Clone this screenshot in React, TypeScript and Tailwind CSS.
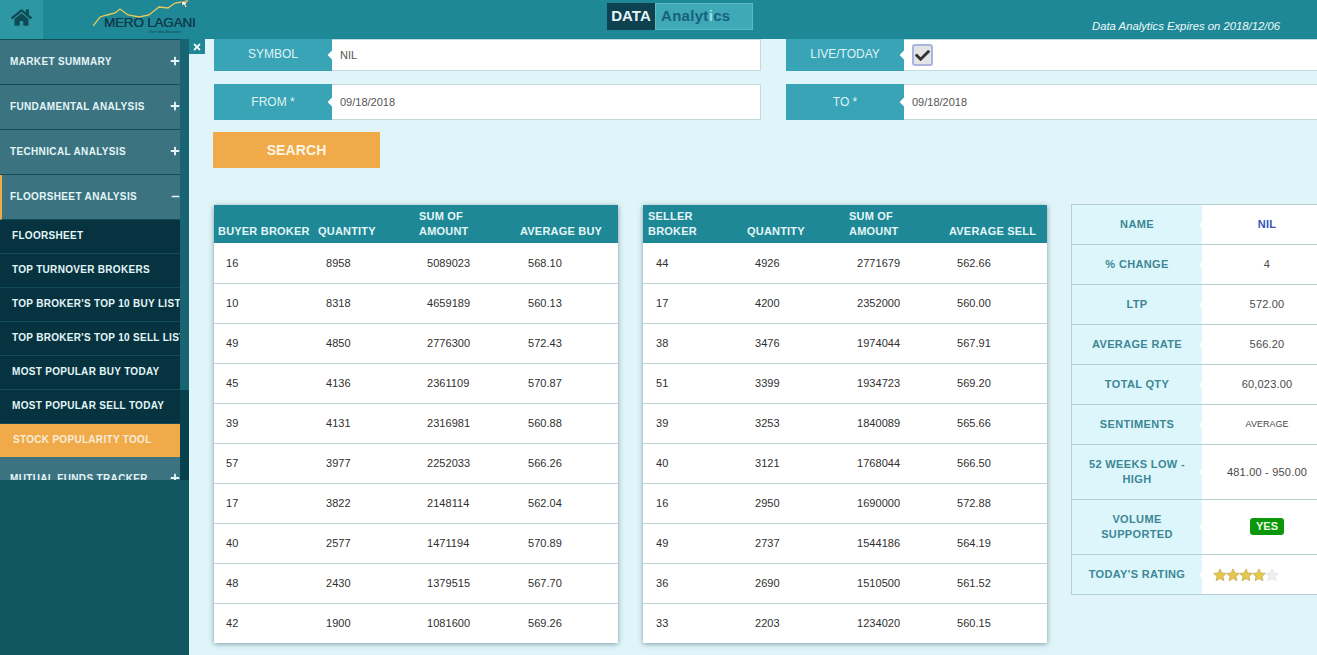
import { FaHome, FaCheck, FaTimes, FaPlus, FaMinus } from "react-icons/fa";

const font = { fontFamily: '"Liberation Sans", Arial, sans-serif' };

const menuTop = ["MARKET SUMMARY", "FUNDAMENTAL ANALYSIS", "TECHNICAL ANALYSIS"];
const subMenu = [
  "FLOORSHEET",
  "TOP TURNOVER BROKERS",
  "TOP BROKER'S TOP 10 BUY LIST",
  "TOP BROKER'S TOP 10 SELL LIST",
  "MOST POPULAR BUY TODAY",
  "MOST POPULAR SELL TODAY",
];

const buyRows = [
  ["16", "8958", "5089023", "568.10"],
  ["10", "8318", "4659189", "560.13"],
  ["49", "4850", "2776300", "572.43"],
  ["45", "4136", "2361109", "570.87"],
  ["39", "4131", "2316981", "560.88"],
  ["57", "3977", "2252033", "566.26"],
  ["17", "3822", "2148114", "562.04"],
  ["40", "2577", "1471194", "570.89"],
  ["48", "2430", "1379515", "567.70"],
  ["42", "1900", "1081600", "569.26"],
];
const sellRows = [
  ["44", "4926", "2771679", "562.66"],
  ["17", "4200", "2352000", "560.00"],
  ["38", "3476", "1974044", "567.91"],
  ["51", "3399", "1934723", "569.20"],
  ["39", "3253", "1840089", "565.66"],
  ["40", "3121", "1768044", "566.50"],
  ["16", "2950", "1690000", "572.88"],
  ["49", "2737", "1544186", "564.19"],
  ["36", "2690", "1510500", "561.52"],
  ["33", "2203", "1234020", "560.15"],
];

function MenuItem({ label, open, active }: { label: string; open?: boolean; active?: boolean }) {
  return (
    <div
      className={`flex h-[45px] shrink-0 items-center justify-between border-b border-[#0f4f5c] bg-[#3b7380] pb-0.5 text-[10px] font-bold tracking-[0.35px] text-[#e4f6f8] ${
        active ? "border-l-2 border-l-[#f0aa4a] pl-2" : "pl-2.5"
      }`}
    >
      <span>{label}</span>
      {open ? <FaMinus className="text-[9px]" /> : <FaPlus className="text-[10px]" />}
    </div>
  );
}

function FormField({ label, value, check, tight }: { label: string; value?: string; check?: boolean; tight?: boolean }) {
  return (
    <div className="flex h-full pl-px">
      <div className={`flex w-[118px] items-center justify-center bg-[#39a4b5] text-[12px] text-[#dff3f6] ${tight ? "pb-0.5" : ""}`}>{label}</div>
      <div className="relative flex flex-1 items-center border border-l-0 border-[#c2dbdc] bg-white pl-2 text-[11px] text-[#555]">
        <span className="absolute -left-[3px] top-1/2 h-[7px] w-[7px] -translate-y-1/2 rotate-45 bg-white" />
        {check ? (
          <span className="flex h-[22px] w-[21px] items-center justify-center rounded-[3px] border-2 border-[#a9b5dc] bg-[#e4e4e4] text-[15px] text-[#333]">
            <FaCheck />
          </span>
        ) : (
          value
        )}
      </div>
    </div>
  );
}

function DataTable({ head, rows, cols, thPad, tdPad }: { head: string[]; rows: string[][]; cols: string[]; thPad: string; tdPad: string }) {
  return (
    <table className="w-[404px] table-fixed border-collapse bg-white shadow-[0_1px_5px_rgba(40,80,90,0.55)]">
      <colgroup>
        {cols.map((c, i) => (
          <col key={i} className={c} />
        ))}
      </colgroup>
      <thead>
        <tr className="h-[38px] bg-[#1e8896] text-[11px] font-bold leading-[15px] tracking-[0.2px] text-[#e4f6f8]">
          {head.map((h, i) => (
            <th key={h} className={`pb-1 pr-0 text-left align-bottom font-bold ${thPad}`}>
              {i === 2 ? <span className="block w-[50px]">{h}</span> : h}
            </th>
          ))}
        </tr>
      </thead>
      <tbody>
        {rows.map((r) => (
          <tr key={r[2]} className="h-10 border-b border-[#bfd3d6] text-[11px] tracking-[0.05px] text-[#2f2f2f] last:border-b-0">
            {r.map((c) => (
              <td key={c} className={tdPad}>
                {c}
              </td>
            ))}
          </tr>
        ))}
      </tbody>
    </table>
  );
}

function Star({ fill }: { fill: string }) {
  return (
    <svg width="14" height="14" viewBox="0 0 24 24" className="-mr-px">
      <path
        d="M12 1.500l3.200 7 7.600.8-5.700 5.100 1.600 7.500L12 18l-6.700 3.900 1.600-7.500L1.200 9.300l7.600-.8z"
        fill={fill}
        stroke={fill === "#e6c84e" ? "#b59a35" : "#dddddd"}
        strokeWidth="1"
      />
    </svg>
  );
}

function InfoRow({ label, h, children }: { label: React.ReactNode; h: string; children: React.ReactNode }) {
  return (
    <div className={`flex ${h} border-b border-[#b5d0d3] last:border-b-0`}>
      <div className="flex w-[130px] items-center justify-center bg-[#dcf6fc] px-2 text-center text-[11px] font-bold leading-[15px] tracking-[0.35px] text-[#3d8794]">
        {label}
      </div>
      <div className="relative flex flex-1 items-center justify-center bg-white text-[11px] tracking-[0.2px] text-[#4a4a4a]">
        <span className="absolute -left-[2px] top-1/2 h-[5px] w-[5px] -translate-y-1/2 rotate-45 bg-white" />
        {children}
      </div>
    </div>
  );
}

export default function App() {
  return (
    <div className="flex h-[655px] w-[1317px] flex-col overflow-hidden bg-[#e0f5f9]" style={font}>
      <header className="flex h-[39px] shrink-0 items-center bg-[#1e8896]">
        <div className="flex h-full w-[43px] items-center justify-center bg-[#2e97a4] pb-1 text-[21px] text-[#0f4a55]">
          <FaHome />
        </div>
        <div className="relative ml-[50px] h-full w-[104px]">
          <svg width="104" height="26" viewBox="0 0 104 26" className="absolute left-0 top-0">
            <polyline
              points="0,26 7,17 14,15 22,13 27,9 35,15 46,17 56,15 66,7 75,8 82,3 95,1"
              fill="none"
              stroke="#e8c95a"
              strokeWidth="1.3"
            />
            <path d="M89 1l6 2-2.500 1 1.500 3-1.500.6-1.500-3-2 1.500z" fill="#ffffff" stroke="#333" strokeWidth="0.4" />
          </svg>
          <span className="absolute left-[11px] top-[18px] whitespace-nowrap text-[13.5px] leading-[10px] tracking-[-0.2px] text-[#0e3a4b] [text-shadow:0_0_0.5px_#0e3a4b]">
            MERO LAGANI
          </span>
          <span className="absolute left-[56px] top-[29px] whitespace-nowrap font-['Liberation_Serif'] text-[5px] italic leading-[6px] text-[#0e3a4b]">
            For the Investor
          </span>
        </div>
        <div className="ml-[410px] mt-[3px] flex h-[27px] w-[146px] self-start">
          <div className="flex w-[48px] items-center justify-center bg-[#0f4250] text-[15px] font-bold text-[#e8f6f8]">DATA</div>
          <div className="flex flex-1 items-center border border-[#5fb8c6] bg-[#40a9b8] pl-[5px] text-[15px] font-bold tracking-[0.3px] text-[#15617a]">
            Analyt<span className="text-[#9fe0e8]">i</span>cs
          </div>
        </div>
        <div className="ml-auto mr-[37px] mt-[14px] text-[11.3px] italic text-[#eefafc]">Data Analytics Expires on 2018/12/06</div>
      </header>

      <div className="flex min-h-0 flex-1">
        <aside className="flex w-[189px] shrink-0 flex-col bg-[#0f5661]">
          <div className="flex h-[441px] shrink-0">
            <nav className="w-[180px] overflow-hidden border-t border-[#0f4f5c]">
              {menuTop.map((m) => (
                <MenuItem key={m} label={m} />
              ))}
              <MenuItem label="FLOORSHEET ANALYSIS" open active />
              {subMenu.map((s) => (
                <div
                  key={s}
                  className="flex h-[34px] items-center overflow-hidden whitespace-nowrap border-b border-[#134c58] bg-[#06333f] pb-0.5 pl-3 text-[10px] font-bold tracking-[0.3px] text-[#e4f6f8]"
                >
                  {s}
                </div>
              ))}
              <div className="flex h-[33px] items-center bg-[#f0aa4a] pb-0.5 pl-[13px] text-[10px] font-bold tracking-[0.3px] text-[#f8ecd8]">
                STOCK POPULARITY TOOL
              </div>
              <MenuItem label="MUTUAL FUNDS TRACKER" />
            </nav>
            <div className="flex w-[9px] flex-col bg-[#06414d]">
              <div className="h-[351px] bg-[#186473]" />
            </div>
          </div>
        </aside>

        <main className="relative min-w-0 flex-1 overflow-hidden pl-6">
          <div className="absolute left-0 top-0 flex h-[15px] w-4 items-center justify-center bg-[#1e8896] text-[10px] text-white">
            <FaTimes />
          </div>
          <div className="grid w-[1120px] grid-cols-[548px_548px] gap-x-6">
            <div className="h-8">
              <FormField label="SYMBOL" value="NIL" tight />
            </div>
            <div className="h-8">
              <FormField label="LIVE/TODAY" check tight />
            </div>
            <div className="mt-[13px] h-9">
              <FormField label="FROM *" value="09/18/2018" />
            </div>
            <div className="mt-[13px] h-9">
              <FormField label="TO *" value="09/18/2018" />
            </div>
          </div>
          <button className="mt-3 block h-9 w-[167px] bg-[#f0aa4a] text-[14px] font-bold tracking-[0.1px] text-[#fdf4e4]">SEARCH</button>

          <div className="mt-[37px] flex w-[1120px] items-start gap-x-[25px] pl-px">
            <DataTable
              head={["BUYER BROKER", "QUANTITY", "SUM OF AMOUNT", "AVERAGE BUY"]}
              rows={buyRows}
              cols={["w-[100px]", "w-[101px]", "w-[101px]", "w-[102px]"]}
              thPad="pl-1"
              tdPad="pl-3"
            />
            <DataTable
              head={["SELLER BROKER", "QUANTITY", "SUM OF AMOUNT", "AVERAGE SELL"]}
              rows={sellRows}
              cols={["w-[99px]", "w-[102px]", "w-[100px]", "w-[103px]"]}
              thPad="pl-[5px]"
              tdPad="pl-[13px]"
            />
            <div className="-ml-px -mt-px w-[262px] border border-[#b5d0d3]">
              <InfoRow label="NAME" h="h-10"><span className="font-bold text-[#3355bb]">NIL</span></InfoRow>
              <InfoRow label="% CHANGE" h="h-10">4</InfoRow>
              <InfoRow label="LTP" h="h-10">572.00</InfoRow>
              <InfoRow label="AVERAGE RATE" h="h-10">566.20</InfoRow>
              <InfoRow label="TOTAL QTY" h="h-10">60,023.00</InfoRow>
              <InfoRow label="SENTIMENTS" h="h-10"><span className="text-[9px] tracking-normal">AVERAGE</span></InfoRow>
              <InfoRow label="52 WEEKS LOW - HIGH" h="h-[55px]">481.00 - 950.00</InfoRow>
              <InfoRow label="VOLUME SUPPORTED" h="h-[55px]">
                <span className="mb-0.5 rounded-[3px] bg-[#0a980a] px-[6px] py-[2px] text-[11px] font-bold leading-[13px] tracking-normal text-[#eafbe6]">YES</span>
              </InfoRow>
              <InfoRow label="TODAY'S RATING" h="h-[39px]">
                <span className="flex w-full pl-[11px]">
                  <Star fill="#e6c84e" />
                  <Star fill="#e6c84e" />
                  <Star fill="#e6c84e" />
                  <Star fill="#e6c84e" />
                  <Star fill="#eeeeee" />
                </span>
              </InfoRow>
            </div>
          </div>
        </main>
      </div>
    </div>
  );
}
